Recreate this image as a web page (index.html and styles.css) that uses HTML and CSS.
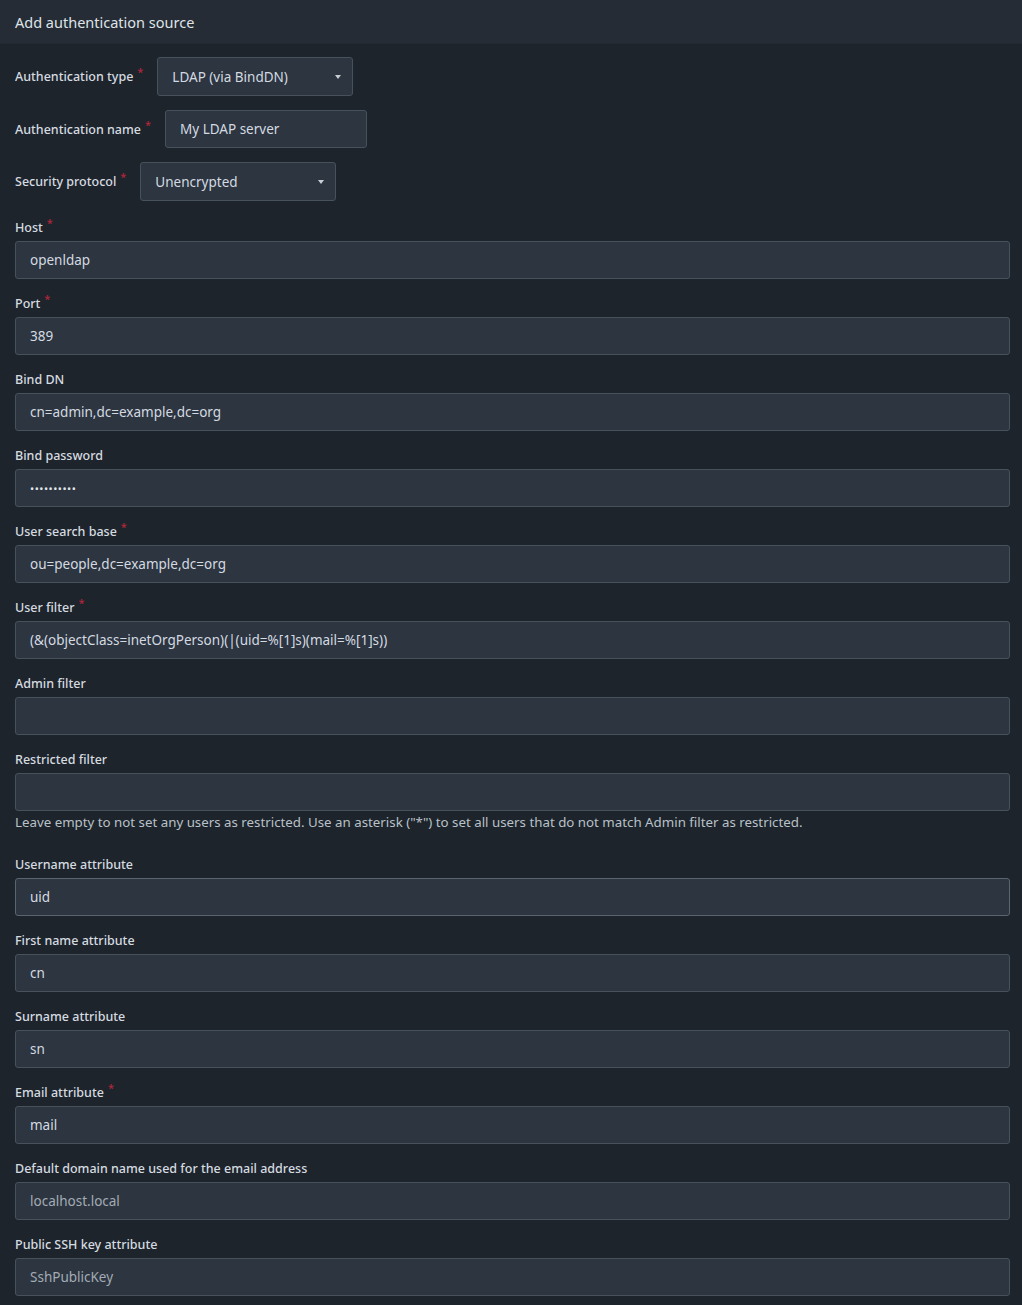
FILE: index.html
```html
<!DOCTYPE html>
<html>
<head>
<meta charset="utf-8">
<link rel="stylesheet" href="styles.css">
</head>
<body>
<div class="page">
  <div class="header">Add authentication source</div>
  <form class="form">
    <div class="inline-field">
      <label class="label">Authentication type<span class="req">*</span></label>
      <div class="select sel-type"><span>LDAP (via BindDN)</span><span class="caret"></span></div>
    </div>
    <div class="inline-field">
      <label class="label">Authentication name<span class="req">*</span></label>
      <div class="input name-input">My LDAP server</div>
    </div>
    <div class="inline-field">
      <label class="label">Security protocol<span class="req">*</span></label>
      <div class="select sel-proto"><span>Unencrypted</span><span class="caret"></span></div>
    </div>

    <div class="field">
      <label class="label">Host<span class="req">*</span></label>
      <div class="input">openldap</div>
    </div>
    <div class="field">
      <label class="label">Port<span class="req">*</span></label>
      <div class="input">389</div>
    </div>
    <div class="field">
      <label class="label">Bind DN</label>
      <div class="input">cn=admin,dc=example,dc=org</div>
    </div>
    <div class="field">
      <label class="label">Bind password</label>
      <div class="input password">••••••••••</div>
    </div>
    <div class="field">
      <label class="label">User search base<span class="req">*</span></label>
      <div class="input">ou=people,dc=example,dc=org</div>
    </div>
    <div class="field">
      <label class="label">User filter<span class="req">*</span></label>
      <div class="input">(&amp;(objectClass=inetOrgPerson)(|(uid=%[1]s)(mail=%[1]s))</div>
    </div>
    <div class="field">
      <label class="label">Admin filter</label>
      <div class="input"></div>
    </div>
    <div class="field field-help">
      <label class="label">Restricted filter</label>
      <div class="input"></div>
      <p class="help">Leave empty to not set any users as restricted. Use an asterisk ("*") to set all users that do not match Admin filter as restricted.</p>
    </div>
    <div class="field">
      <label class="label">Username attribute</label>
      <div class="input focused">uid</div>
    </div>
    <div class="field">
      <label class="label">First name attribute</label>
      <div class="input">cn</div>
    </div>
    <div class="field">
      <label class="label">Surname attribute</label>
      <div class="input">sn</div>
    </div>
    <div class="field">
      <label class="label">Email attribute<span class="req">*</span></label>
      <div class="input">mail</div>
    </div>
    <div class="field">
      <label class="label">Default domain name used for the email address</label>
      <div class="input placeholder">localhost.local</div>
    </div>
    <div class="field">
      <label class="label">Public SSH key attribute</label>
      <div class="input placeholder">SshPublicKey</div>
    </div>
  </form>
</div>
</body>
</html>
```
FILE: styles.css
```css
* { box-sizing: border-box; }
html, body {
  margin: 0;
  padding: 0;
  background: #1d242b;
}
body {
  font-family: "Noto Sans", "Open Sans", sans-serif;
  color: #d9dee3;
}
.page {
  width: 1022px;
}
.header {
  height: 44px;
  background: #252c35;
  padding: 0 15px;
  display: flex;
  align-items: center;
  font-size: 14.5px;
  color: #dfe3e8;
  border-bottom: 1px solid #222931;
}
.form {
  padding: 13px 12px 10px 15px;
  margin: 0;
}
.label {
  font-size: 12.5px;
  font-weight: 500;
  color: #d6dbe0;
  line-height: 17px;
  display: block;
}
.req {
  color: #b3263c;
  font-size: 11px;
  position: relative;
  top: -5px;
  margin-left: 4px;
}
.inline-field {
  display: flex;
  align-items: center;
  margin-bottom: 14px;
}
.inline-field .label {
  margin-right: 14px;
}
.select, .input {
  background: #2c3540;
  border: 1px solid #47515c;
  border-radius: 3px;
  font-size: 13.5px;
  color: #d4dae0;
  height: 38px;
  display: flex;
  align-items: center;
  padding: 0 14px;
}
.select {
  justify-content: space-between;
  height: 39px;
}
.sel-type { width: 196px; }
.sel-proto { width: 196px; }
.name-input { width: 202px; }
.caret {
  width: 0;
  height: 0;
  border-left: 3.5px solid transparent;
  border-right: 3.5px solid transparent;
  border-top: 4px solid #c8ced4;
  margin-right: -3px;
}
.field {
  margin-bottom: 16px;
}
.field .label {
  margin-bottom: 5px;
}
.inline-field + .field { margin-top: 18px; }
.input.password {
  font-size: 11px;
  letter-spacing: 0.5px;
  color: #e2e6ea;
}
.input.focused {
  border-color: #5a6470;
}
.input.placeholder {
  color: #a3abb4;
}
.field-help {
  margin-bottom: 25px;
}
.help {
  margin: 3px 0 0 0;
  font-size: 13.3px;
  color: #b9c1c9;
  line-height: 17px;
}
```
